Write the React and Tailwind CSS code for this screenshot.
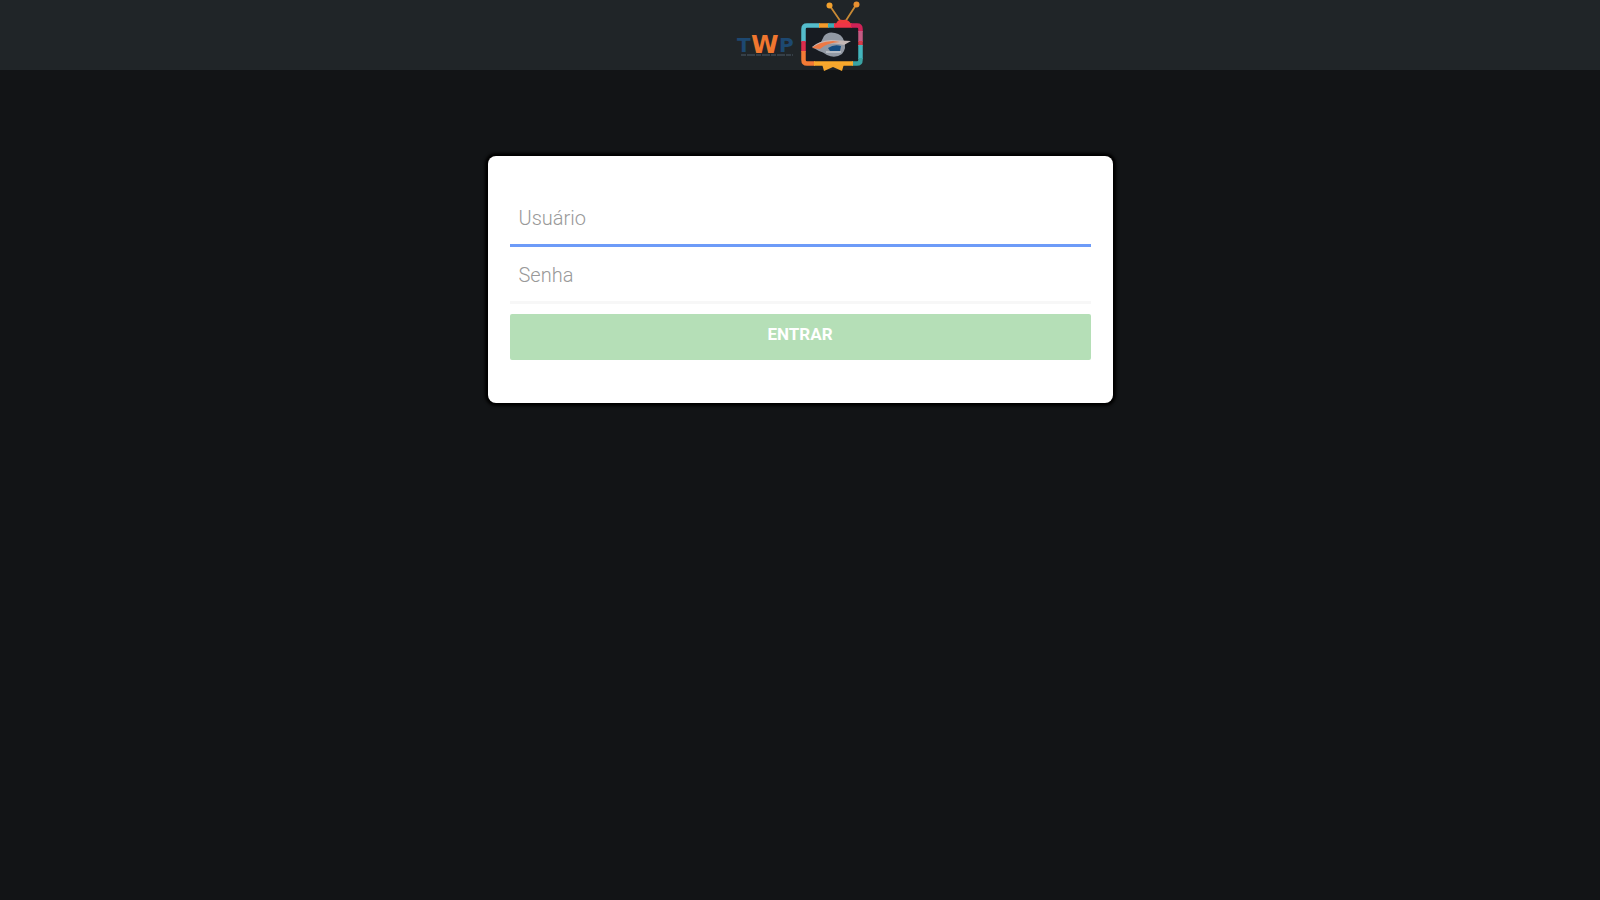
import React, { useState } from 'react';

const Logo = () => (
  <svg
    className="block w-[150px] h-[75px]"
    viewBox="0 0 150 75"
    role="img"
    aria-label="TWP"
  >
    {/* Wordmark */}
    <g fontFamily="'DejaVu Sans', 'Liberation Sans', sans-serif" fontWeight="700">
      <text x="12" y="52" fontSize="20" fill="#1d4870">T</text>
      <text x="54" y="52" fontSize="20" fill="#1d4870">P</text>
      <text x="26" y="53" fontSize="25" fill="#f0772f">W</text>
    </g>
    <path d="M16 55 H68" stroke="#3d4852" strokeWidth="1.5" strokeDasharray="5 1 8 1" fill="none" />

    {/* Antennas */}
    <g stroke="#c98a35" strokeWidth="1.8" strokeLinecap="round" fill="none">
      <path d="M105 6 L116 22" />
      <path d="M131 5 L120 22" />
    </g>
    <circle cx="104.500" cy="5.500" r="3" fill="#f2a12e" />
    <circle cx="131.500" cy="4.500" r="3" fill="#e89030" />
    <path d="M111 24 Q113 19 118 20 Q123 19 126 24 Z" fill="#ee3a3c" />

    {/* TV set */}
    <rect x="78" y="25" width="58" height="39" rx="4" fill="#171b21" />
    <g fill="none" strokeWidth="4.500">
      <path d="M78.500 42 V29 Q78.500 25.500 82 25.500 H95" stroke="#54bccb" />
      <path d="M94 25.500 H104" stroke="#f39a2b" />
      <path d="M103 25.500 H110" stroke="#3ba9b5" />
      <path d="M109 25.500 H127" stroke="#ee3548" />
      <path d="M126 25.500 H132 Q135.500 25.500 135.500 29 V32" stroke="#cf2257" />
      <path d="M135.500 31 V42" stroke="#c55b83" />
      <path d="M135.500 41 V46" stroke="#d63b48" />
      <path d="M135.500 45 V59" stroke="#43b5bd" />
      <path d="M135.500 58 V60 Q135.500 63.500 132 63.500 H127" stroke="#3aa2a3" />
      <path d="M78.500 41 V52" stroke="#dc2d4c" />
      <path d="M78.500 51 V60 Q78.500 63.500 82 63.500 H90" stroke="#f37a35" />
      <path d="M89 63.500 H128" stroke="#f9a92c" />
    </g>
    <path d="M97 64 H119 L117 71 L108 67 L99 71 Z" fill="#f6a72d" />

    {/* Globe on the screen */}
    <path d="M99 36 Q103 31 110 33 Q117 34 119 41 Q122 48 117 54 Q110 59 102 55 Q98 52 94 51 L87 47 L96 42 Z" fill="#9299a4" />
    <path d="M87 47 Q93 41 106 40 L126 41 L119 45 Q108 42 98 45 Z" fill="#c5b8b5" />
    <path d="M87 48 Q93 42 108 41 L115 42 Q101 43 95 49 Z" fill="#ed7945" />
    <path d="M103 48 Q109 44 116 46 L115 51 H105 Z" fill="#174d80" />
    <path d="M101 52 H116" stroke="#c2c8cf" strokeWidth="1.500" />
  </svg>
);

const inputClass =
  'block w-full h-14 px-[9px] border-b-[3px] text-xl font-light text-gray-700 placeholder:text-[#999999] outline-none';

const App = () => {
  const [user, setUser] = useState('');
  const [password, setPassword] = useState('');

  return (
    <div className="min-h-screen bg-[#121416] font-[Roboto,'Liberation_Sans',sans-serif]">
      <header className="flex justify-center h-[70px] bg-[#202528]">
        <Logo />
      </header>

      <main className="flex justify-center px-4 pt-[86px]">
        <form
          className="w-full max-w-[625px] px-[22px] pt-[35px] pb-[43px] bg-white rounded-lg shadow-[0_0_3px_3px_#000000]"
          onSubmit={(e) => e.preventDefault()}
        >
          <input
            className={`${inputClass} border-[#6d9bf8]`}
            type="text"
            aria-label="Usuário"
            placeholder="Usuário"
            value={user}
            onChange={(e) => setUser(e.target.value)}
          />
          <input
            className={`${inputClass} mt-px border-[#f7f7f7]`}
            type="password"
            aria-label="Senha"
            placeholder="Senha"
            value={password}
            onChange={(e) => setPassword(e.target.value)}
          />
          <button
            className="block w-full h-[46px] mt-[10px] pb-1 rounded-xs bg-[#b5dfb7] text-[17px] font-bold text-white uppercase"
            type="submit"
          >
            Entrar
          </button>
        </form>
      </main>
    </div>
  );
};

export default App;
